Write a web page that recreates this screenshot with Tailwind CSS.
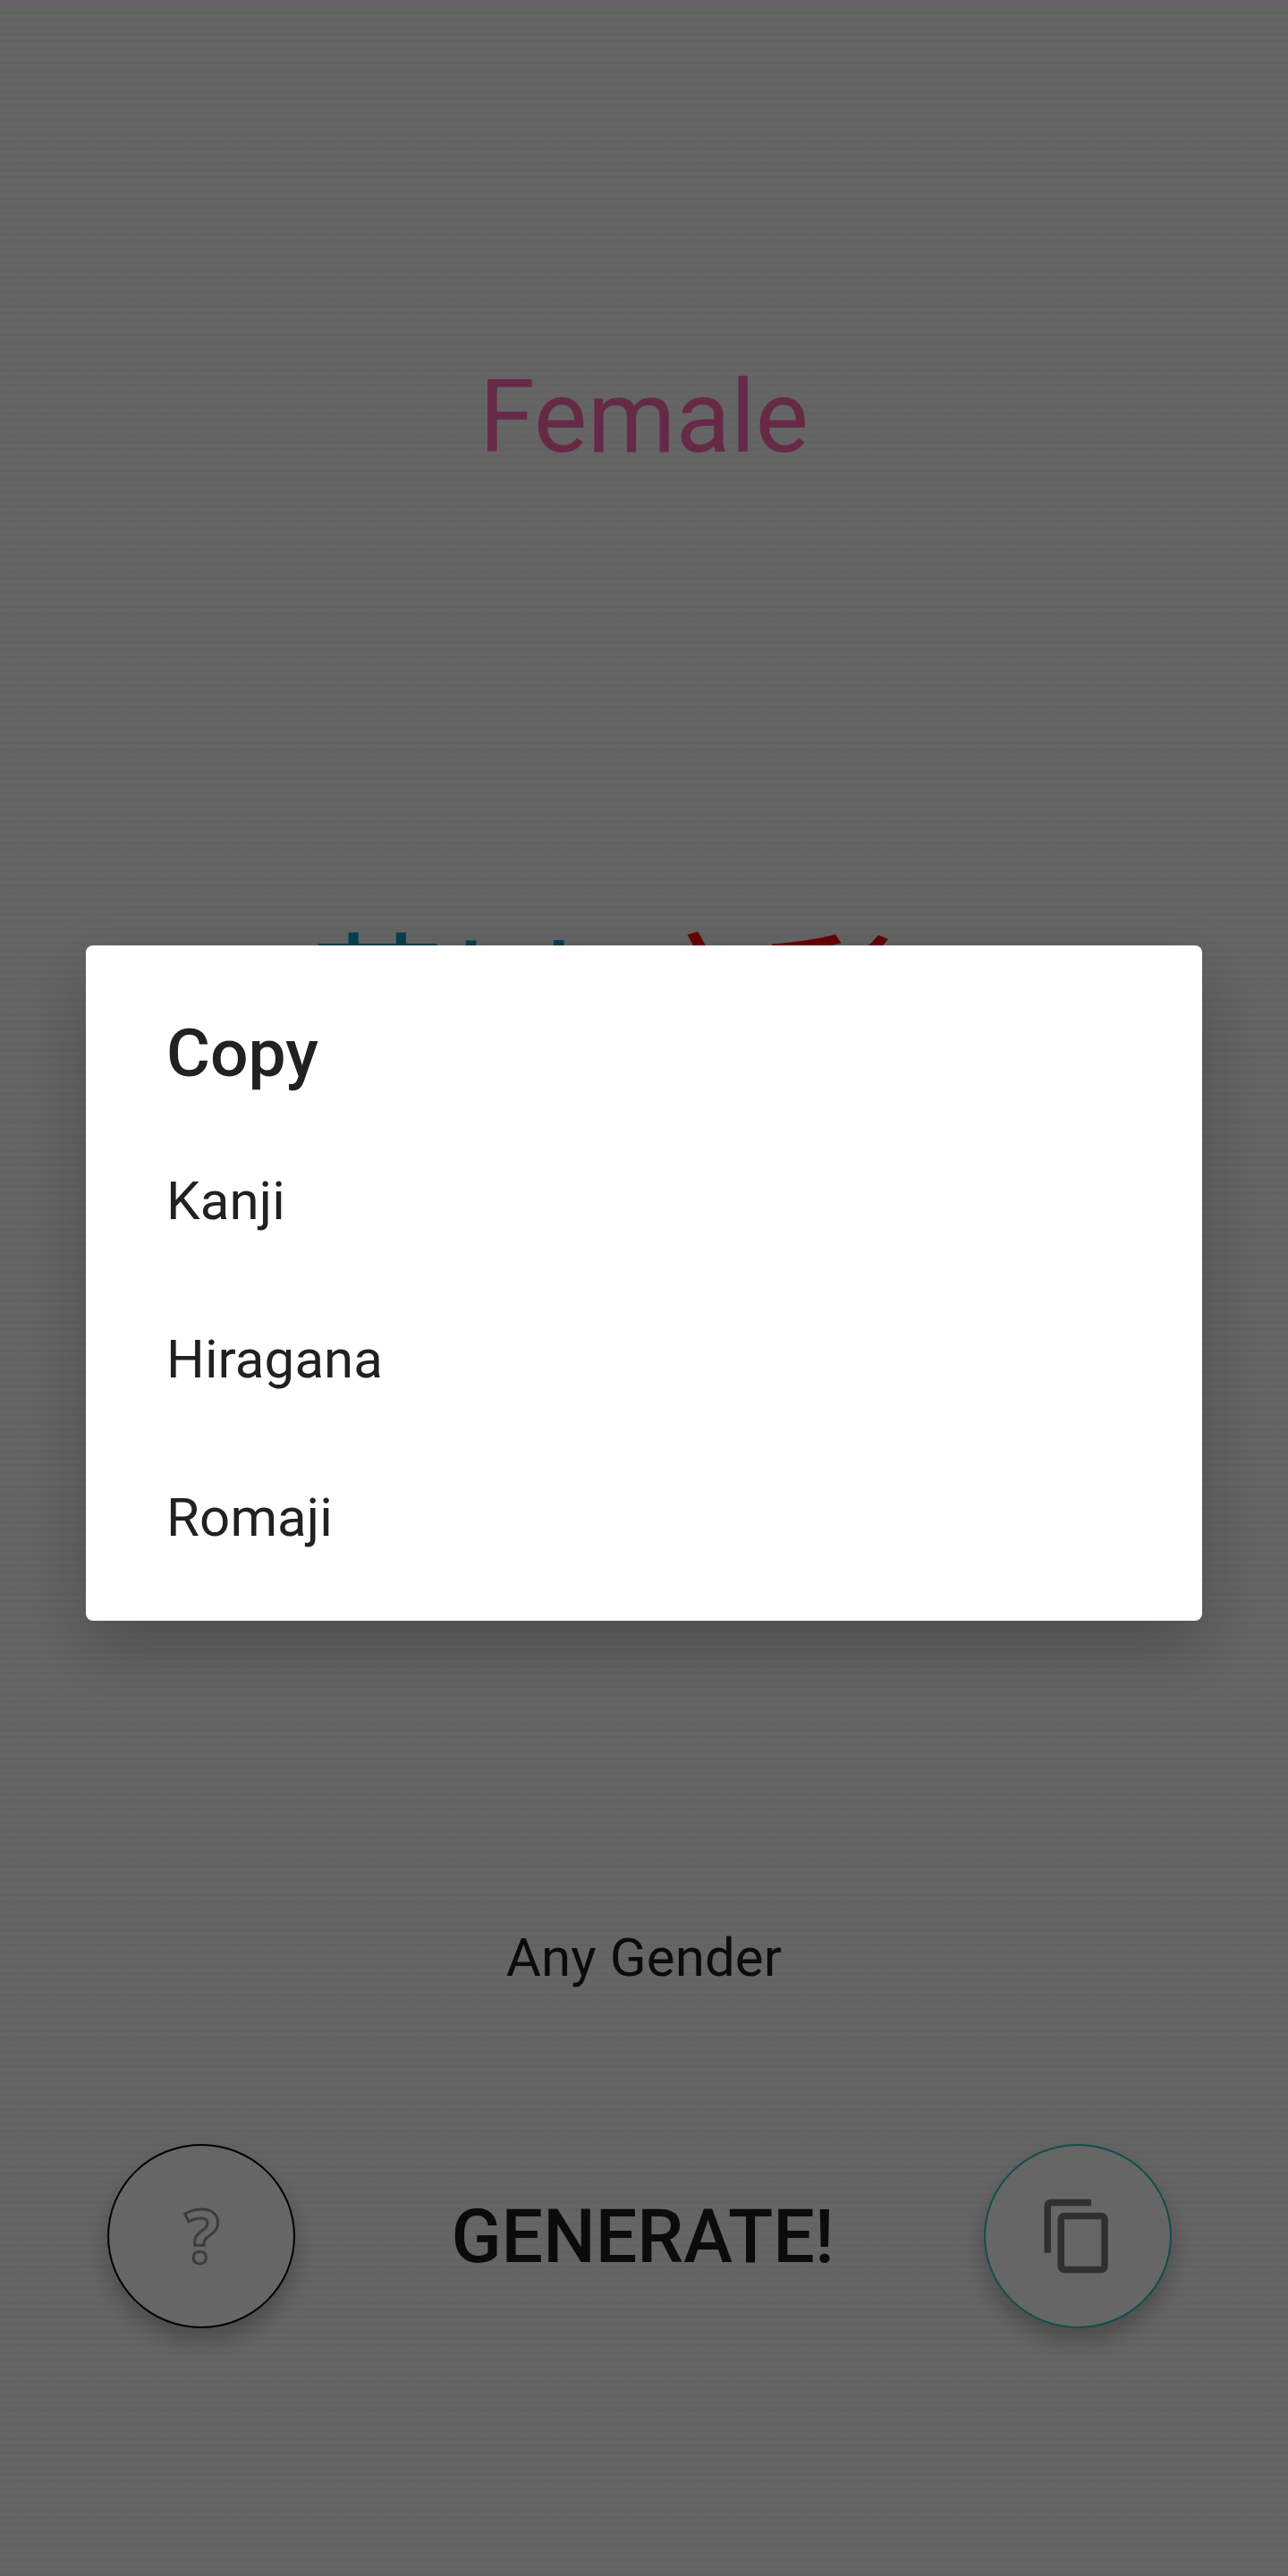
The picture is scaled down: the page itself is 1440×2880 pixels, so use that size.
<!DOCTYPE html>
<html lang="en">
<head>
  <meta charset="UTF-8" />
  <meta name="viewport" content="width=device-width, initial-scale=1" />
  <title>Name Generator</title>
  <script src="https://cdn.jsdelivr.net/npm/@tailwindcss/browser@4"></script>
  <style>
    body {
      font-family: Roboto, 'Noto Sans CJK SC', sans-serif;
    }
  </style>
</head>
<body class="relative h-[2880px] w-[1440px] overflow-hidden bg-[#646464]">
  <main class="flex h-full flex-col bg-[repeating-linear-gradient(to_bottom,#656565_0px,#656565_4px,#626262_6px,#626262_7px,#656565_8px)]">
    <div class="h-1 shrink-0 bg-[#68616d]"></div>
    <p class="mt-[397px] h-[132px] text-center text-[112.5px] leading-[132px] tracking-[0.2px] text-[#662a47]">Female</p>

    <!-- generated name -->
    <div lang="zh-Hans" class="mt-[476px] flex h-[218px] pl-[347px] text-[150px] leading-[218px]">
      <span class="text-[#063f50]">荒川</span>
      <span class="ml-[58px] text-[#650306]">文彩</span>
    </div>

    <p class="mt-[926px] h-[72px] text-center text-[60px] leading-[72px] tracking-[0.1px] text-[#0b0b0b]">Any Gender</p>

    <div class="mt-[172px] flex h-[206px] items-center justify-between pl-[120px] pr-[130px]">
      <button class="flex h-[206px] w-[210px] items-center justify-center rounded-[50%] border-2 border-black bg-[#666] shadow-[0_14px_24px_rgba(0,0,0,0.25)]">
        <span class="pb-1 pl-[2px] font-['Open_Sans'] text-[82px] font-bold leading-none text-transparent [-webkit-text-stroke:3px_#3c3c3c]">?</span>
      </button>
      <button class="ml-[7px] pt-[2px] text-[82.5px] font-medium leading-none text-[#0b0b0b]">GENERATE!</button>
      <button class="flex h-[206px] w-[210px] items-center justify-center rounded-[50%] border-2 border-[#124e4b] bg-[#666] shadow-[0_14px_24px_rgba(0,0,0,0.25)]">
        <svg class="size-[90px] fill-[#303030]" viewBox="0 0 24 24">
          <path d="M16 1H4c-1.1 0-2 .9-2 2v14h2V3h12V1zm3 4H8c-1.1 0-2 .9-2 2v14c0 1.1.9 2 2 2h11c1.1 0 2-.9 2-2V7c0-1.1-.9-2-2-2zm0 16H8V7h11v14z" />
        </svg>
      </button>
    </div>
  </main>

  <!-- copy dialog -->
  <div class="absolute left-[96px] top-[1057px] h-[755px] w-[1248px] rounded-[8px] bg-white px-[90px] text-[#212121] shadow-[0_32px_70px_rgba(0,0,0,0.22)]">
    <h2 class="pt-[76px] text-[75px] font-medium leading-[88px]">Copy</h2>
    <ul class="mt-[33px] text-[60px] tracking-[0.1px]">
      <li class="flex h-[177px] items-center">Kanji</li>
      <li class="flex h-[177px] items-center">Hiragana</li>
      <li class="flex h-[177px] items-center">Romaji</li>
    </ul>
  </div>
</body>
</html>
